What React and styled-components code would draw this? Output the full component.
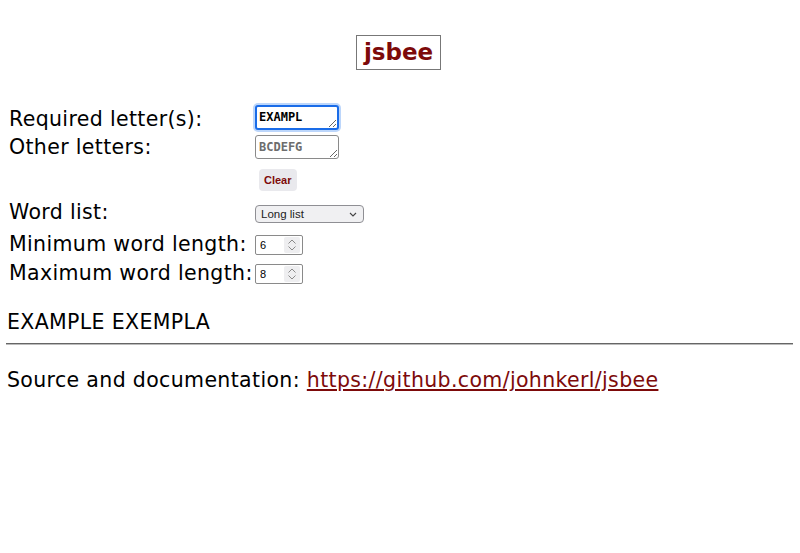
import React from 'react';
import styled, { createGlobalStyle } from 'styled-components';

const GlobalStyle = createGlobalStyle`
  body {
    margin: 7px 7px 7px 6px;
    background: #fff;
    color: #000;
    font-family: "DejaVu Sans", Verdana, sans-serif;
  }
`;

const Header = styled.div`
  display: flex;
  justify-content: center;
  padding-top: 28px;
  margin-right: 2px;
`;

const TitleBox = styled.div`
  border: 1px solid #777;
  padding: 2px 7px 3px;
  font-size: 23px;
  font-weight: bold;
  color: #7d0a0a;
  line-height: 28px;
`;

const Form = styled.div`
  display: grid;
  grid-template-columns: 246px auto;
  align-items: center;
  margin-top: 33px;
  padding-left: 3px;
`;

const Label = styled.div`
  font-size: 20.5px;
  letter-spacing: 0.35px;
  line-height: 24px;
  height: ${p => p.h || 29}px;
  display: flex;
  align-items: center;
  padding-top: ${p => p.drop || 0}px;
  padding-bottom: ${p => p.lift || 0}px;
  box-sizing: border-box;
  white-space: nowrap;
`;

const Cell = styled.div`
  height: ${p => p.h || 29}px;
  display: flex;
  align-items: center;
`;

const Letters = styled.textarea`
  box-sizing: border-box;
  width: 84px;
  height: ${p => (p.focused ? 25 : 24)}px;
  padding: ${p => (p.focused ? '3px 2px' : '4px 3px')};
  font-family: "DejaVu Sans Mono", monospace;
  font-weight: bold;
  font-size: 12px;
  line-height: 15px;
  color: #000;
  border: ${p => (p.focused ? '2px solid #1a6ce8' : '1px solid #8a8a8a')};
  border-radius: 3px;
  box-shadow: ${p => (p.focused ? '0 0 0 2px #bcd6fb' : 'none')};
  outline: none;
  resize: both;
  overflow: hidden;
  &::placeholder {
    color: #6d6d6d;
  }
`;

const ClearButton = styled.button`
  font-family: "Liberation Sans", Arial, sans-serif;
  font-size: 11px;
  font-weight: bold;
  color: #7d0a0a;
  background: #e9e9ed;
  border: none;
  border-radius: 4px;
  padding: 5px 5px;
  margin-left: 4px;
`;

const SelectBox = styled.div`
  box-sizing: border-box;
  width: 109px;
  height: 18px;
  display: flex;
  align-items: center;
  border: 1px solid #8f8f94;
  border-radius: 4px;
  background: #f0f0f2;
  padding: 0 6px 0 5px;
`;

const Select = styled.select`
  appearance: none;
  flex: 1;
  border: none;
  background: transparent;
  font-family: "Liberation Sans", Arial, sans-serif;
  font-size: 11.5px;
  color: #222;
  padding: 0;
  outline: none;
`;

const NumberBox = styled.div`
  box-sizing: border-box;
  width: 48px;
  height: 20px;
  display: flex;
  align-items: center;
  border: 1px solid #8a8a8a;
  border-radius: 2px;
  background: #fff;
  padding: 0 2px 0 4px;
`;

const NumberInput = styled.input`
  appearance: textfield;
  width: 22px;
  border: none;
  padding: 0;
  font-family: "Liberation Sans", Arial, sans-serif;
  font-size: 11px;
  color: #000;
  outline: none;
  &::-webkit-inner-spin-button,
  &::-webkit-outer-spin-button {
    -webkit-appearance: none;
    margin: 0;
  }
`;

const Spinner = styled.span`
  margin-left: auto;
  width: 16px;
  height: 16px;
  background: #eeeef0;
  border-radius: 2px;
  display: flex;
  align-items: center;
  justify-content: center;
`;

const Words = styled.div`
  font-size: 20.5px;
  letter-spacing: 0.35px;
  line-height: 24px;
  margin-top: 21px;
  padding-left: 1px;
`;

const Rule = styled.hr`
  border: none;
  border-top: 1px solid #666;
  border-bottom: 1px solid #bbb;
  margin: 9px 0 0;
  height: 0;
`;

const Footer = styled.p`
  font-size: 20.5px;
  letter-spacing: 0.35px;
  line-height: 24px;
  margin: 23px 0 0;
  padding-left: 1px;
`;

const Link = styled.a`
  color: #7d0a0a;
  text-decoration: underline;
`;

function Chevron() {
  return (
    <svg width="8" height="5" viewBox="0 0 8 5">
      <path d="M1 1 L4 4 L7 1" fill="none" stroke="#444" strokeWidth="1.1" />
    </svg>
  );
}

function SpinArrows() {
  return (
    <svg width="10" height="14" viewBox="0 0 10 14">
      <path d="M1.5 5.5 L5 2 L8.5 5.5" fill="none" stroke="#8a8a8a" strokeWidth="1" />
      <path d="M1.5 8.5 L5 12 L8.5 8.5" fill="none" stroke="#8a8a8a" strokeWidth="1" />
    </svg>
  );
}

function LengthField({ value }) {
  return (
    <NumberBox>
      <NumberInput type="number" defaultValue={value} />
      <Spinner>
        <SpinArrows />
      </Spinner>
    </NumberBox>
  );
}

export default function App() {
  return (
    <>
      <GlobalStyle />
      <Header>
        <TitleBox>jsbee</TitleBox>
      </Header>
      <Form>
        <Label drop={2}>Required letter(s):</Label>
        <Cell>
          <Letters focused defaultValue="EXAMPL" />
        </Cell>
        <Label>Other letters:</Label>
        <Cell>
          <Letters placeholder="BCDEFG" />
        </Cell>
        <Label h={37} />
        <Cell h={37}>
          <ClearButton>Clear</ClearButton>
        </Cell>
        <Label h={32} lift={4}>Word list:</Label>
        <Cell h={32}>
          <SelectBox>
            <Select defaultValue="long">
              <option value="long">Long list</option>
              <option value="short">Short list</option>
            </Select>
            <Chevron />
          </SelectBox>
        </Cell>
        <Label lift={2}>Minimum word length:</Label>
        <Cell>
          <LengthField value={6} />
        </Cell>
        <Label h={30} lift={2}>Maximum word length:</Label>
        <Cell h={30}>
          <LengthField value={8} />
        </Cell>
      </Form>
      <Words>EXAMPLE EXEMPLA</Words>
      <Rule />
      <Footer>
        Source and documentation:{' '}
        <Link href="#">https://github.com/johnkerl/jsbee</Link>
      </Footer>
    </>
  );
}
